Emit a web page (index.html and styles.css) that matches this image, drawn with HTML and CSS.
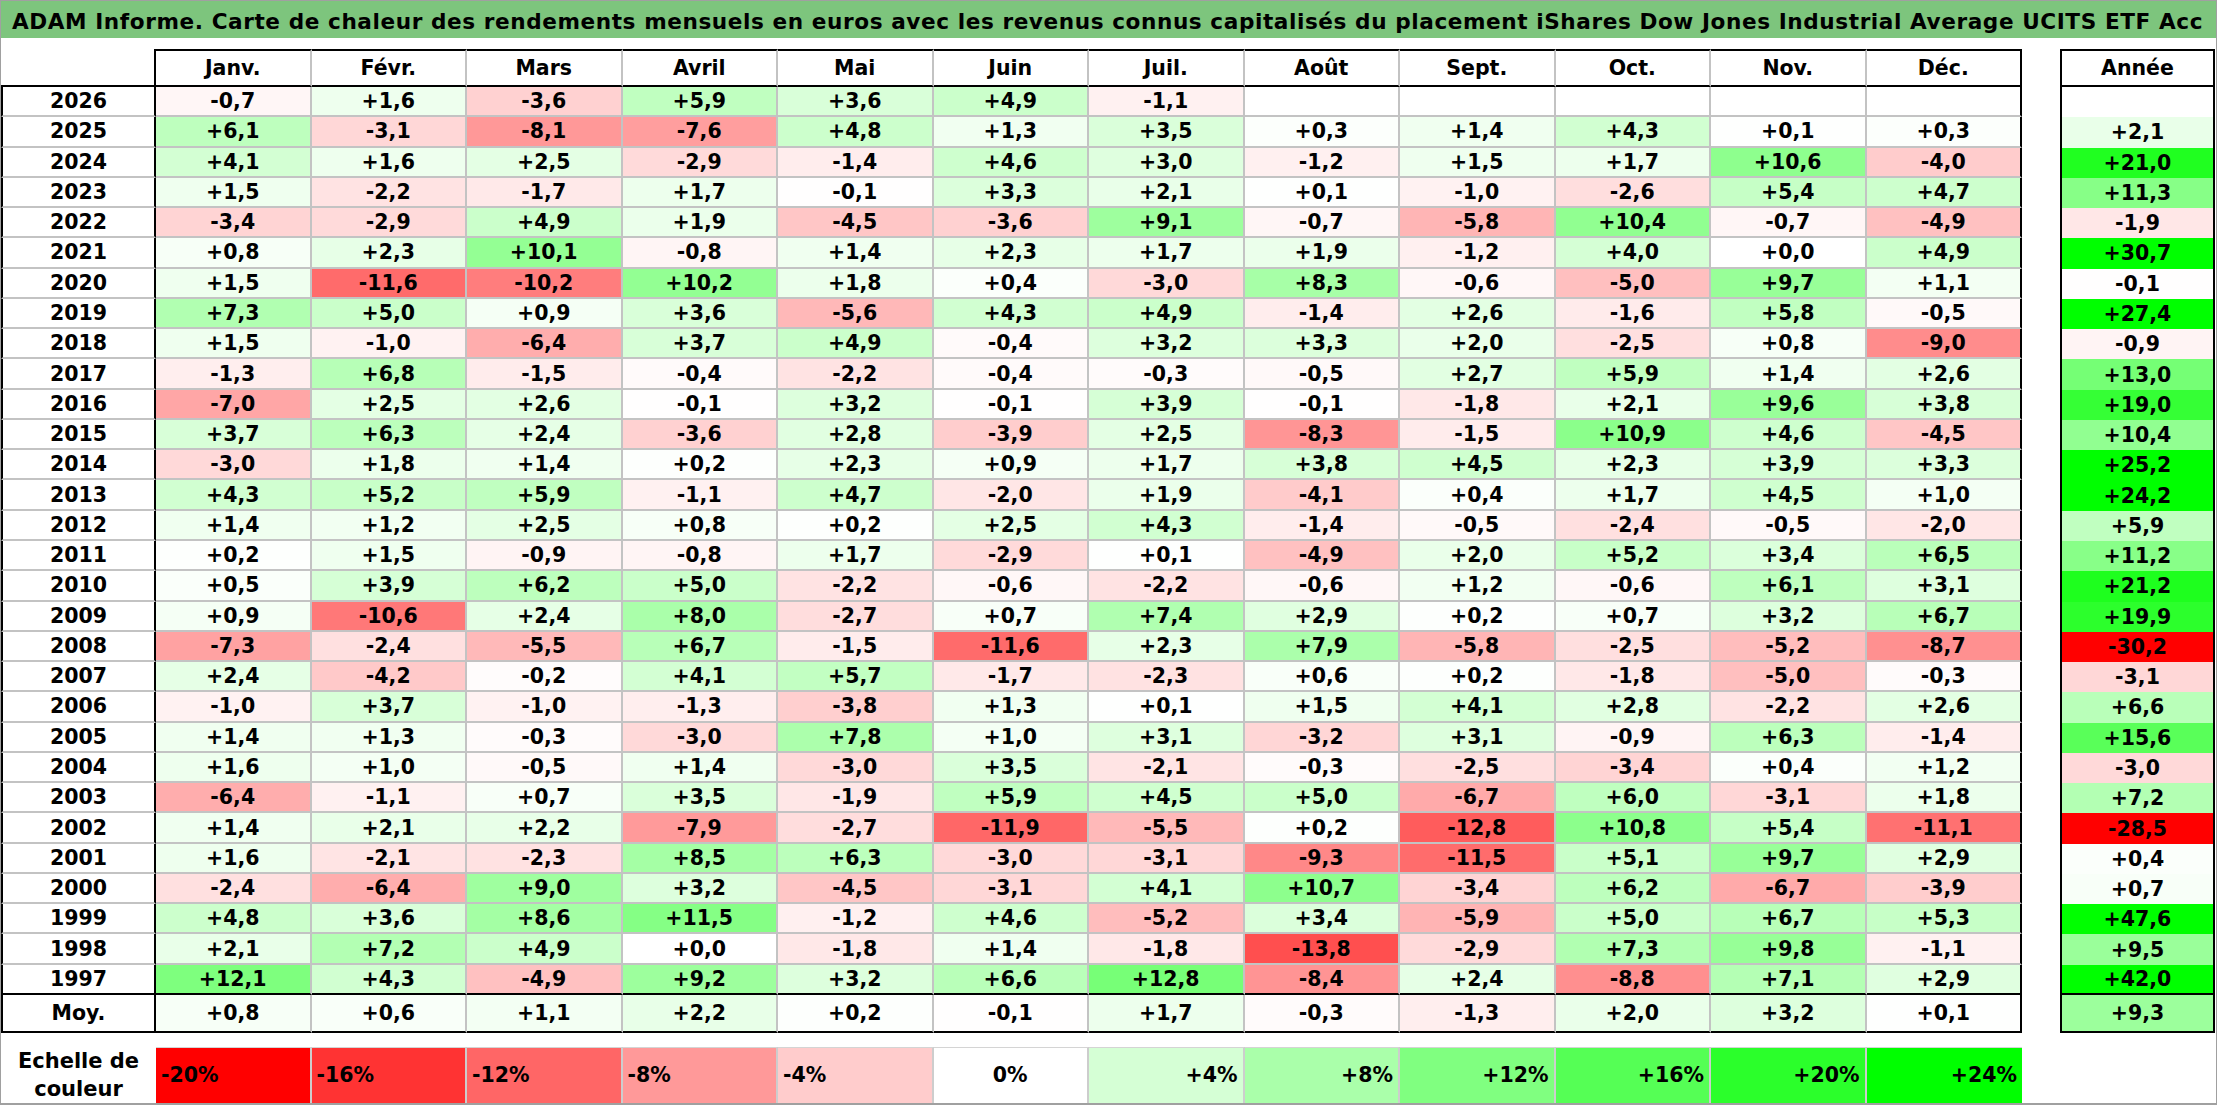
FILE: index.html
```html
<!DOCTYPE html>
<html lang="fr">
<head>
<meta charset="utf-8">
<title>ADAM Informe – Carte de chaleur</title>
<link rel="stylesheet" href="styles.css">
</head>
<body>
<div class="frame">
  <div class="title">ADAM Informe. Carte de chaleur des rendements mensuels en euros avec les revenus connus capitalisés du placement iShares Dow Jones Industrial Average UCITS ETF Acc</div>
  <div class="tables">
    <div class="main" id="main"></div>
    <div class="annual" id="annual"></div>
  </div>
  <div class="legend">
    <div class="lg-label">Echelle de<br>couleur</div>
    <div class="lg lg-neg n20">-20%</div>
    <div class="lg lg-neg n16">-16%</div>
    <div class="lg lg-neg n12">-12%</div>
    <div class="lg lg-neg n8">-8%</div>
    <div class="lg lg-neg n4">-4%</div>
    <div class="lg lg-zero">0%</div>
    <div class="lg lg-pos p4">+4%</div>
    <div class="lg lg-pos p8">+8%</div>
    <div class="lg lg-pos p12">+12%</div>
    <div class="lg lg-pos p16">+16%</div>
    <div class="lg lg-pos p20">+20%</div>
    <div class="lg lg-pos p24">+24%</div>
  </div>
</div>
<script src="script.js"></script>
</body>
</html>
```

FILE: styles.css
```css
html, body {
  margin: 0;
  padding: 0;
  background: #ffffff;
}
body {
  font-family: "DejaVu Sans", "Liberation Sans", sans-serif;
  font-weight: bold;
  color: #000;
}
.frame {
  width: 2217px;
  height: 1105px;
  box-sizing: border-box;
  border: 1px solid #a0a0a0;
  border-bottom-width: 2px;
  overflow: hidden;
}
.title {
  height: 37px;
  box-sizing: border-box;
  background: #7dc57d;
  padding: 5px 0 0 11px;
  font-size: 21.6px;
  letter-spacing: 0.58px;
  line-height: 31px;
  white-space: nowrap;
}
.tables {
  display: flex;
  gap: 38px;
  margin-top: 11px;
}
.main {
  display: grid;
  grid-template-columns: 155px repeat(12, 155.5px);
  grid-template-rows: 38px repeat(30, 30.27px) 38px;
}
.annual {
  display: grid;
  grid-template-columns: 155px;
  grid-template-rows: 38px repeat(30, 30.27px) 38px;
}
.c {
  box-sizing: border-box;
  display: flex;
  align-items: center;
  justify-content: center;
  font-size: 20.5px;
  white-space: nowrap;
}
/* main table */
.corner {
  border-right: 2px solid #000;
  border-bottom: 2px solid #000;
}
.hm {
  border-top: 2px solid #000;
  border-bottom: 2px solid #000;
  border-right: 2px solid #c3c3c3;
}
.hm.last { border-right-color: #000; }
.yr {
  border-left: 2px solid #000;
  border-right: 2px solid #000;
  border-bottom: 2px solid #c3c3c3;
}
.d {
  border-right: 2px solid #c3c3c3;
  border-bottom: 2px solid #c3c3c3;
}
.d.last { border-right-color: #000; }
.endrow { border-bottom-color: #000; }
.avg { border-bottom: 2px solid #000; }
/* annual table */
.ha {
  border: 2px solid #000;
}
.a {
  border-left: 2px solid #000;
  border-right: 2px solid #000;
}
.a.endrow { border-bottom: 2px solid #000; }
/* legend */
.legend {
  display: grid;
  grid-template-columns: 155px repeat(12, 155.5px);
  height: 56px;
  margin-top: 14px;
}
.lg-label {
  font-size: 21px;
  line-height: 28px;
  text-align: center;
  display: flex;
  align-items: center;
  justify-content: center;
}
.lg {
  box-sizing: border-box;
  display: flex;
  align-items: center;
  font-size: 20.5px;
  border-right: 2px solid #cdcdcd;
  border-top: 1px solid #d4d4d4;
  padding: 0 5px;
}
.lg:last-child { border-right: none; }
.lg-neg { justify-content: flex-start; }
.lg-zero { justify-content: center; }
.lg-pos { justify-content: flex-end; }
.n20 { background: #ff0000; }
.n16 { background: #ff3333; }
.n12 { background: #ff6666; }
.n8 { background: #ff9999; }
.n4 { background: #ffcccc; }
.lg-zero { background: #ffffff; }
.p4 { background: #d5ffd5; }
.p8 { background: #aaffaa; }
.p12 { background: #80ff80; }
.p16 { background: #55ff55; }
.p20 { background: #2bff2b; }
.p24 { background: #00ff00; }
```

FILE: script.js
```js
(function () {
  var months = ["Janv.", "Févr.", "Mars", "Avril", "Mai", "Juin", "Juil.", "Août", "Sept.", "Oct.", "Nov.", "Déc."];
  var rows = [
    ["2026", "-0,7 +1,6 -3,6 +5,9 +3,6 +4,9 -1,1 . . . . .", "."],
    ["2025", "+6,1 -3,1 -8,1 -7,6 +4,8 +1,3 +3,5 +0,3 +1,4 +4,3 +0,1 +0,3", "+2,1"],
    ["2024", "+4,1 +1,6 +2,5 -2,9 -1,4 +4,6 +3,0 -1,2 +1,5 +1,7 +10,6 -4,0", "+21,0"],
    ["2023", "+1,5 -2,2 -1,7 +1,7 -0,1 +3,3 +2,1 +0,1 -1,0 -2,6 +5,4 +4,7", "+11,3"],
    ["2022", "-3,4 -2,9 +4,9 +1,9 -4,5 -3,6 +9,1 -0,7 -5,8 +10,4 -0,7 -4,9", "-1,9"],
    ["2021", "+0,8 +2,3 +10,1 -0,8 +1,4 +2,3 +1,7 +1,9 -1,2 +4,0 +0,0 +4,9", "+30,7"],
    ["2020", "+1,5 -11,6 -10,2 +10,2 +1,8 +0,4 -3,0 +8,3 -0,6 -5,0 +9,7 +1,1", "-0,1"],
    ["2019", "+7,3 +5,0 +0,9 +3,6 -5,6 +4,3 +4,9 -1,4 +2,6 -1,6 +5,8 -0,5", "+27,4"],
    ["2018", "+1,5 -1,0 -6,4 +3,7 +4,9 -0,4 +3,2 +3,3 +2,0 -2,5 +0,8 -9,0", "-0,9"],
    ["2017", "-1,3 +6,8 -1,5 -0,4 -2,2 -0,4 -0,3 -0,5 +2,7 +5,9 +1,4 +2,6", "+13,0"],
    ["2016", "-7,0 +2,5 +2,6 -0,1 +3,2 -0,1 +3,9 -0,1 -1,8 +2,1 +9,6 +3,8", "+19,0"],
    ["2015", "+3,7 +6,3 +2,4 -3,6 +2,8 -3,9 +2,5 -8,3 -1,5 +10,9 +4,6 -4,5", "+10,4"],
    ["2014", "-3,0 +1,8 +1,4 +0,2 +2,3 +0,9 +1,7 +3,8 +4,5 +2,3 +3,9 +3,3", "+25,2"],
    ["2013", "+4,3 +5,2 +5,9 -1,1 +4,7 -2,0 +1,9 -4,1 +0,4 +1,7 +4,5 +1,0", "+24,2"],
    ["2012", "+1,4 +1,2 +2,5 +0,8 +0,2 +2,5 +4,3 -1,4 -0,5 -2,4 -0,5 -2,0", "+5,9"],
    ["2011", "+0,2 +1,5 -0,9 -0,8 +1,7 -2,9 +0,1 -4,9 +2,0 +5,2 +3,4 +6,5", "+11,2"],
    ["2010", "+0,5 +3,9 +6,2 +5,0 -2,2 -0,6 -2,2 -0,6 +1,2 -0,6 +6,1 +3,1", "+21,2"],
    ["2009", "+0,9 -10,6 +2,4 +8,0 -2,7 +0,7 +7,4 +2,9 +0,2 +0,7 +3,2 +6,7", "+19,9"],
    ["2008", "-7,3 -2,4 -5,5 +6,7 -1,5 -11,6 +2,3 +7,9 -5,8 -2,5 -5,2 -8,7", "-30,2"],
    ["2007", "+2,4 -4,2 -0,2 +4,1 +5,7 -1,7 -2,3 +0,6 +0,2 -1,8 -5,0 -0,3", "-3,1"],
    ["2006", "-1,0 +3,7 -1,0 -1,3 -3,8 +1,3 +0,1 +1,5 +4,1 +2,8 -2,2 +2,6", "+6,6"],
    ["2005", "+1,4 +1,3 -0,3 -3,0 +7,8 +1,0 +3,1 -3,2 +3,1 -0,9 +6,3 -1,4", "+15,6"],
    ["2004", "+1,6 +1,0 -0,5 +1,4 -3,0 +3,5 -2,1 -0,3 -2,5 -3,4 +0,4 +1,2", "-3,0"],
    ["2003", "-6,4 -1,1 +0,7 +3,5 -1,9 +5,9 +4,5 +5,0 -6,7 +6,0 -3,1 +1,8", "+7,2"],
    ["2002", "+1,4 +2,1 +2,2 -7,9 -2,7 -11,9 -5,5 +0,2 -12,8 +10,8 +5,4 -11,1", "-28,5"],
    ["2001", "+1,6 -2,1 -2,3 +8,5 +6,3 -3,0 -3,1 -9,3 -11,5 +5,1 +9,7 +2,9", "+0,4"],
    ["2000", "-2,4 -6,4 +9,0 +3,2 -4,5 -3,1 +4,1 +10,7 -3,4 +6,2 -6,7 -3,9", "+0,7"],
    ["1999", "+4,8 +3,6 +8,6 +11,5 -1,2 +4,6 -5,2 +3,4 -5,9 +5,0 +6,7 +5,3", "+47,6"],
    ["1998", "+2,1 +7,2 +4,9 +0,0 -1,8 +1,4 -1,8 -13,8 -2,9 +7,3 +9,8 -1,1", "+9,5"],
    ["1997", "+12,1 +4,3 -4,9 +9,2 +3,2 +6,6 +12,8 -8,4 +2,4 -8,8 +7,1 +2,9", "+42,0"],
    ["Moy.", "+0,8 +0,6 +1,1 +2,2 +0,2 -0,1 +1,7 -0,3 -1,3 +2,0 +3,2 +0,1", "+9,3"]
  ];

  function colour(s) {
    if (s === ".") return "#ffffff";
    var v = parseFloat(s.replace(",", "."));
    var t, c;
    if (v > 0) {
      t = Math.min(v / 24, 1);
      c = Math.round(255 * (1 - t));
      return "rgb(" + c + ",255," + c + ")";
    }
    if (v < 0) {
      t = Math.min(-v / 20, 1);
      c = Math.round(255 * (1 - t));
      return "rgb(255," + c + "," + c + ")";
    }
    return "#ffffff";
  }

  function cell(parent, cls, text, bg) {
    var el = document.createElement("div");
    el.className = "c " + cls;
    el.textContent = text === "." ? "" : text;
    if (bg) el.style.background = bg;
    parent.appendChild(el);
    return el;
  }

  var main = document.getElementById("main");
  var annual = document.getElementById("annual");

  cell(main, "corner", "");
  months.forEach(function (m, i) {
    cell(main, "hm" + (i === 11 ? " last" : ""), m);
  });
  cell(annual, "ha", "Année");

  rows.forEach(function (r, ri) {
    var isAvg = r[0] === "Moy.";
    var isEnd = ri === rows.length - 2;
    var extra = isAvg ? " avg" : (isEnd ? " endrow" : "");
    cell(main, "yr" + extra, r[0]);
    r[1].split(" ").forEach(function (v, i) {
      cell(main, "d" + (i === 11 ? " last" : "") + extra, v, colour(v));
    });
    cell(annual, "a" + (isAvg || isEnd ? " endrow" : ""), r[2], colour(r[2]));
  });
})();
```
